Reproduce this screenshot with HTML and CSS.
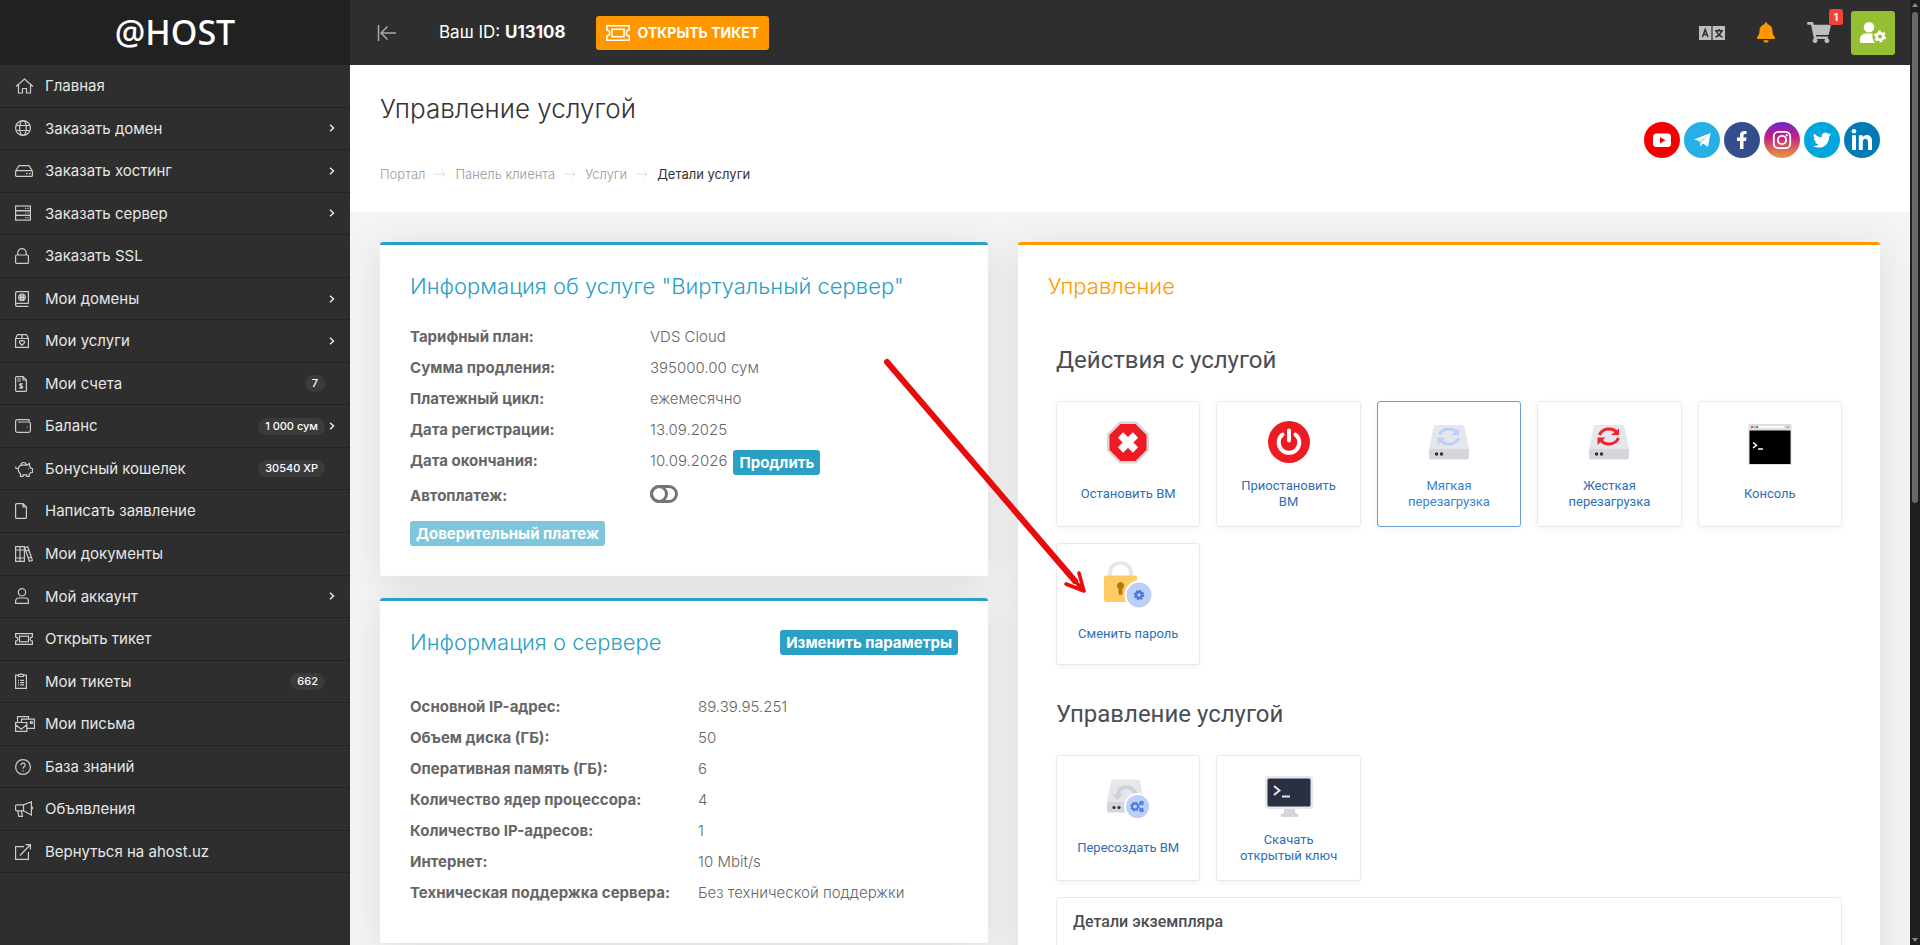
FILE: index.html
```html
<!DOCTYPE html>
<html lang="ru">
<head>
  <meta charset="UTF-8" />
  <title>Управление услугой</title>
  <link rel="stylesheet" href="styles.css">
</head>
<body>

  <!-- menu icons -->
  <svg class="sprite" aria-hidden="true">
    <symbol id="i-home" viewBox="0 0 20 16"><path d="M1 8.5 9.5 1 18 8.5M3.500 7v8h4v-4.500h4V15h4V7"/></symbol>
    <symbol id="i-globe" viewBox="0 0 16 16"><circle cx="8" cy="8" r="7.400"/><ellipse cx="8" cy="8" rx="3.400" ry="7.400"/><path d="M1.300 5.500h13.400M1.300 10.500h13.400"/></symbol>
    <symbol id="i-drive" viewBox="0 0 18 12"><path d="M.6 6 4 .6h10L17.400 6M1.600 5.600h14.800a1 1 0 0 1 1 1v3.800a1 1 0 0 1-1 1H1.600a1 1 0 0 1-1-1V6.600a1 1 0 0 1 1-1zM11 8.600h1.500M14 8.600h1.500"/></symbol>
    <symbol id="i-server" viewBox="0 0 16 16"><rect x=".6" y="1" width="14.800" height="4.700"/><rect x=".6" y="5.700" width="14.800" height="4.700"/><rect x=".6" y="10.400" width="14.800" height="4.700"/><path d="M10 3.300h1.200M12.500 3.300h1.200M10 8h1.200M12.500 8h1.200M10 12.700h1.200M12.500 12.700h1.200"/></symbol>
    <symbol id="i-lock" viewBox="0 0 14 16"><rect x=".6" y="7" width="12.800" height="8.400" rx="1"/><path d="M2.800 7V4.800a4.200 4.200 0 0 1 8.400 0V7"/></symbol>
    <symbol id="i-domains" viewBox="0 0 14 16"><path d="M13.400 12.400V.6H2A1.400 1.400 0 0 0 .6 2v12A1.400 1.400 0 0 0 2 15.400h11.400M.6 13.800A1.400 1.400 0 0 1 2 12.400h11.400"/><circle cx="7" cy="6.300" r="3.300"/><path d="M3.700 6.300h6.600M7 3v6.600M5.500 3.500v5.600M8.500 3.500v5.600"/></symbol>
    <symbol id="i-box" viewBox="0 0 14 14"><path d="M.6 4.500 2.500.6h9l1.900 3.900v8.900H.6zM.6 4.500h12.800M7 .6v3.900M7 11.200 4.700 9a1.300 1.300 0 0 1 2.300-1.800A1.300 1.300 0 0 1 9.300 9z"/></symbol>
    <symbol id="i-bill" viewBox="0 0 12 16"><path d="M1.600.6H8L11.400 4v10.400a1 1 0 0 1-1 1H1.600a1 1 0 0 1-1-1V1.600a1 1 0 0 1 1-1zM8 .6V4h3.400M2.300 3h3.500M2.300 5h3.500M7.800 8.300c-.5-.8-3.400-.9-3.400.5 0 1.500 3.400.7 3.400 2.200 0 1.400-2.900 1.300-3.500.4M6 7v6"/></symbol>
    <symbol id="i-wallet" viewBox="0 0 16 14"><path d="M14 3V.6H2.600a2 2 0 0 0-2 2v9a1.800 1.800 0 0 0 1.800 1.800h11.200a1.800 1.800 0 0 0 1.800-1.800V4.800A1.800 1.800 0 0 0 13.600 3H3M11.800 8h1"/></symbol>
    <symbol id="i-piggy" viewBox="0 0 18 16"><path d="M2 7.500C.9 7.500.4 6.500.8 5.700M2 7.500h1.200c.5-2 2-3.400 4.300-3.400h4.200L14.500 2.500v2.800c.8.600 1.400 1.400 1.700 2.200h1.200v4h-1.600l-1.600 1.700v2.200h-2.600v-1.500H8v1.500H5.400v-2.600C4 11.900 3 10.600 3.100 7.500M6 4.100a2.600 2.600 0 1 1 5.200 0M13 7.800h.8"/></symbol>
    <symbol id="i-file" viewBox="0 0 12 16"><path d="M1.600.6H8L11.400 4v10.400a1 1 0 0 1-1 1H1.600a1 1 0 0 1-1-1V1.600a1 1 0 0 1 1-1zM8 .6V4h3.400"/></symbol>
    <symbol id="i-books" viewBox="0 0 18 16"><path d="M.6.6h8.800v14.800H.6zM5 .6v14.800M.6 4h8.800M.6 12h8.800M9.700 1.700l3-.9 4.700 13.500-3 .9zM10.900 5l3-.9M13.300 12l3-.9"/></symbol>
    <symbol id="i-user" viewBox="0 0 14 16"><circle cx="7" cy="4.300" r="3.700"/><path d="M.6 15.400V13a3 3 0 0 1 3-3h6.800a3 3 0 0 1 3 3v2.400z"/></symbol>
    <symbol id="i-ticket" viewBox="0 0 18 12"><path d="M.6.6h16.800v3.200a2.200 2.200 0 0 0 0 4.400v3.200H.6V8.200a2.200 2.200 0 0 0 0-4.400z"/><rect x="4.500" y="3.200" width="9" height="5.600"/></symbol>
    <symbol id="i-clipboard" viewBox="0 0 12 16"><path d="M3.500 2.200H.6v13.200h10.800V2.200H8.500M3.500 3.500v-2H5a1.100 1.100 0 0 1 2 0h1.500v2zM3 7.300h1M5.200 7.300H9M3 9.600h1M5.200 9.600H9M3 11.900h1M5.200 11.900H9"/></symbol>
    <symbol id="i-mails" viewBox="0 0 20 16"><path d="M.6 6.500h11.200v8.900H.6zM.6 8.800l5.600 4.400 5.600-4.400M2.500 6V.6h11v2.500M6.500 6V3.200h12.900v9.200h-7"/><path d="M15.500 5.500h1.700v1.800h-1.700z"/></symbol>
    <symbol id="i-help" viewBox="0 0 16 16"><circle cx="8" cy="8" r="7.400"/><path d="M5.900 6.200c0-2.700 4.300-2.600 4.300 0C10.200 7.900 8 7.800 8 9.700M8 11.300v1.200"/></symbol>
    <symbol id="i-horn" viewBox="0 0 18 16"><path d="M8.500 3.800H1.600a1 1 0 0 0-1 1v4a1 1 0 0 0 1 1h6.900L16.400 14V.8zM8.500 3.800v6M2.800 9.800l1 5.600h3.600L6.500 9.800M17.400 5.800v2.400"/></symbol>
    <symbol id="i-external" viewBox="0 0 16 16"><path d="M9 2.600H.6v12.800h12.800V8M5 11.500 15 1M10.500.6h4.900v4.900"/></symbol>
    <symbol id="i-chevron" viewBox="0 0 6 8"><path d="M1 .8 4.500 4 1 7.200"/></symbol>
    <symbol id="i-arrow" viewBox="0 0 12 8"><path d="M0 4h11M8 1l3 3-3 3"/></symbol>
  </svg>

  <div class="app">
    <aside class="sidebar">
      <a href="#" class="logo">@HOST</a>
      <nav class="menu">
        <a href="#"><svg class="icon" width="20" height="16"><use href="#i-home"/></svg><span>Главная</span></a>
        <a href="#"><svg class="icon" width="16" height="16"><use href="#i-globe"/></svg><span>Заказать домен</span><svg class="chevron"><use href="#i-chevron"/></svg></a>
        <a href="#"><svg class="icon" width="18" height="12"><use href="#i-drive"/></svg><span>Заказать хостинг</span><svg class="chevron"><use href="#i-chevron"/></svg></a>
        <a href="#"><svg class="icon" width="16" height="16"><use href="#i-server"/></svg><span>Заказать сервер</span><svg class="chevron"><use href="#i-chevron"/></svg></a>
        <a href="#"><svg class="icon" width="14" height="16"><use href="#i-lock"/></svg><span>Заказать SSL</span></a>
        <a href="#"><svg class="icon" width="14" height="16"><use href="#i-domains"/></svg><span>Мои домены</span><svg class="chevron"><use href="#i-chevron"/></svg></a>
        <a href="#"><svg class="icon" width="14" height="14"><use href="#i-box"/></svg><span>Мои услуги</span><svg class="chevron"><use href="#i-chevron"/></svg></a>
        <a href="#"><svg class="icon" width="12" height="16"><use href="#i-bill"/></svg><span>Мои счета</span><b class="pill">7</b></a>
        <a href="#"><svg class="icon" width="16" height="14"><use href="#i-wallet"/></svg><span>Баланс</span><b class="pill">1 000 сум</b><svg class="chevron"><use href="#i-chevron"/></svg></a>
        <a href="#"><svg class="icon" width="18" height="16"><use href="#i-piggy"/></svg><span>Бонусный кошелек</span><b class="pill">30540 XP</b></a>
        <a href="#"><svg class="icon" width="12" height="16"><use href="#i-file"/></svg><span>Написать заявление</span></a>
        <a href="#"><svg class="icon" width="18" height="16"><use href="#i-books"/></svg><span>Мои документы</span></a>
        <a href="#"><svg class="icon" width="14" height="16"><use href="#i-user"/></svg><span>Мой аккаунт</span><svg class="chevron"><use href="#i-chevron"/></svg></a>
        <a href="#"><svg class="icon" width="18" height="12"><use href="#i-ticket"/></svg><span>Открыть тикет</span></a>
        <a href="#"><svg class="icon" width="12" height="16"><use href="#i-clipboard"/></svg><span>Мои тикеты</span><b class="pill">662</b></a>
        <a href="#"><svg class="icon" width="20" height="16"><use href="#i-mails"/></svg><span>Мои письма</span></a>
        <a href="#"><svg class="icon" width="16" height="16"><use href="#i-help"/></svg><span>База знаний</span></a>
        <a href="#"><svg class="icon" width="18" height="16"><use href="#i-horn"/></svg><span>Объявления</span></a>
        <a href="#"><svg class="icon" width="16" height="16"><use href="#i-external"/></svg><span>Вернуться на ahost.uz</span></a>
      </nav>
    </aside>

    <div class="main">
      <header class="topbar">
        <button type="button" class="collapse" aria-label="Свернуть меню">
          <svg width="20" height="16" viewBox="0 0 20 16"><path d="M1.500 0v16M4 8h15M10.500 1.500 4 8l6.500 6.500"/></svg>
        </button>
        <div class="client-id">Ваш ID: <b>U13108</b></div>
        <a href="#" class="open-ticket">
          <svg class="icon" width="24" height="16"><use href="#i-ticket"/></svg>
          ОТКРЫТЬ ТИКЕТ
        </a>
        <div class="tools">
          <button type="button" aria-label="Язык">
            <svg width="26" height="14" viewBox="0 0 26 14"><path fill="#bdbdbd" d="M0 0h12.400v14H0zM13.600 0H26v14H13.600z"/><path fill="none" stroke="#2e2e2e" stroke-width="1.500" d="M3.500 11 6.200 3.500 8.900 11M4.500 8.500h3.400M16 4.800h8M20 3v1.800M22.500 5c-.8 3-3 5-6 6M17.500 5c1 3 3 5 6 6"/></svg>
          </button>
          <button type="button" aria-label="Уведомления">
            <svg width="18" height="21" viewBox="0 0 448 512"><path fill="#ff9800" d="M224 512c35 0 64-29 64-64H160c0 35 29 64 64 64zm215-149c-19-21-55-52-55-155 0-77-54-139-128-155V32a32 32 0 1 0-64 0v21C118 69 64 131 64 208c0 103-36 134-55 155-6 6-9 14-9 21 0 16 13 32 32 32h384c19 0 32-16 32-32 0-7-3-15-9-21z"/></svg>
          </button>
          <button type="button" class="cart" aria-label="Корзина">
            <svg width="24" height="21" viewBox="0 0 576 512"><path fill="#bdbdbd" d="M528 301 576 94c3-15-8-30-24-30H159l-9-45C148 8 138 0 126 0H24C11 0 0 11 0 24v16c0 13 11 24 24 24h70l70 343a56 56 0 1 0 67 9h210a56 56 0 1 0 64-10l5-26c4-15-8-29-23-29H218l-7-32h294c11 0 21-8 23-18z"/></svg>
            <b class="cart-count">1</b>
          </button>
          <button type="button" class="profile" aria-label="Профиль">
            <svg width="26" height="22" viewBox="0 0 26 22"><path fill="#fff" d="M9 0a5.300 5.300 0 1 1 0 10.600A5.300 5.300 0 0 1 9 0zM5.500 11.500h7.300c-.6 2-.6 6 2.200 9.500H1.500A1.500 1.500 0 0 1 0 19.500v-2.600a5.500 5.500 0 0 1 5.500-5.400z"/><circle cx="20" cy="14.500" r="3.300" fill="none" stroke="#fff" stroke-width="2.600"/><circle cx="20" cy="14.500" r="5" fill="none" stroke="#fff" stroke-width="2" stroke-dasharray="2.800 2.430"/></svg>
          </button>
        </div>
      </header>

      <section class="page-head">
        <div>
          <h1>Управление услугой</h1>
          <nav class="crumbs">
            <a href="#">Портал</a><svg><use href="#i-arrow"/></svg>
            <a href="#">Панель клиента</a><svg><use href="#i-arrow"/></svg>
            <a href="#">Услуги</a><svg><use href="#i-arrow"/></svg>
            <span>Детали услуги</span>
          </nav>
        </div>
        <div class="socials">
          <a href="#" aria-label="YouTube"><svg viewBox="0 0 36 36"><circle cx="18" cy="18" r="18" fill="#f40000"/><rect x="9" y="11.500" width="18" height="13.500" rx="3.500" fill="#fff"/><path fill="#f40000" d="M16 15v6.500l5.500-3.200z"/></svg></a>
          <a href="#" aria-label="Telegram"><svg viewBox="0 0 36 36"><circle cx="18" cy="18" r="18" fill="#27b0e6"/><path fill="#fff" d="m10 17.600 16.500-6.500L24 25l-5-3.600-2.500 3-1-5.400z"/><path fill="#b5d7ea" d="m15.500 19 8-5.500-5.800 6.800-1.200 4.100z"/></svg></a>
          <a href="#" aria-label="Facebook"><svg viewBox="0 0 36 36"><circle cx="18" cy="18" r="18" fill="#344e8d"/><path fill="#fff" d="M16 27v-8h-3v-3.500h3V13c0-3 2-4.500 6.500-4V12c-2-.1-3 .1-3 1.800v1.700h3L22 19h-2.500v8z"/></svg></a>
          <a href="#" aria-label="Instagram"><svg viewBox="0 0 36 36"><defs><linearGradient id="insta" x2="0" y2="1"><stop stop-color="#6a28d0"/><stop offset=".4" stop-color="#c01e88"/><stop offset="1" stop-color="#e89c3c"/></linearGradient></defs><circle cx="18" cy="18" r="18" fill="url(#insta)"/><g fill="none" stroke="#fff" stroke-width="1.800"><rect x="9.800" y="9.800" width="16.400" height="16.400" rx="4.500"/><circle cx="18" cy="18" r="4.200"/></g><circle cx="22.800" cy="13.300" r="1.200" fill="#fff"/></svg></a>
          <a href="#" aria-label="Twitter"><svg viewBox="0 0 36 36"><circle cx="18" cy="18" r="18" fill="#00a6de"/><path fill="#fff" d="M27 12.500c-.7.300-1.300.5-2 .6.700-.5 1.300-1.100 1.600-2-.7.400-1.500.7-2.300.9a3.700 3.700 0 0 0-6.400 3.400c-3.100-.2-5.800-1.600-7.600-3.900a3.700 3.700 0 0 0 1.100 5c-.6 0-1.200-.2-1.700-.5 0 1.800 1.300 3.400 3 3.700-.5.200-1.100.2-1.700.1.500 1.500 1.800 2.500 3.500 2.600A7.500 7.500 0 0 1 9 23.900c7.500 4.500 16.200-.3 16.200-9.500.7-.5 1.300-1.200 1.800-1.900z"/></svg></a>
          <a href="#" aria-label="LinkedIn"><svg viewBox="0 0 36 36"><circle cx="18" cy="18" r="18" fill="#017ab5"/><path fill="#fff" d="M8 13.200h4V28H8zM14.800 13.200h4v2c2-3.500 9.200-3.200 9.200 3.800v9h-4v-8c0-4.500-5.200-4-5.200 0v8h-4z"/><circle cx="10" cy="9.300" r="2.300" fill="#fff"/></svg></a>
        </div>
      </section>

      <main class="content">
        <div class="column">
          <section class="card">
            <div class="card-head"><h2>Информация об услуге "Виртуальный сервер"</h2></div>
            <dl class="info">
              <div><dt>Тарифный план:</dt><dd>VDS Cloud</dd></div>
              <div><dt>Сумма продления:</dt><dd>395000.00 сум</dd></div>
              <div><dt>Платежный цикл:</dt><dd>ежемесячно</dd></div>
              <div><dt>Дата регистрации:</dt><dd>13.09.2025</dd></div>
              <div><dt>Дата окончания:</dt><dd>10.09.2026 <button type="button" class="btn">Продлить</button></dd></div>
              <div><dt><label for="autopay">Автоплатеж:</label></dt><dd><input type="checkbox" id="autopay" class="toggle"></dd></div>
            </dl>
            <button type="button" class="btn" disabled>Доверительный платеж</button>
          </section>

          <section class="card server">
            <div class="card-head"><h2>Информация о сервере</h2><button type="button" class="btn">Изменить параметры</button></div>
            <dl class="info info-wide">
              <div><dt>Основной IP-адрес:</dt><dd>89.39.95.251</dd></div>
              <div><dt>Объем диска (ГБ):</dt><dd>50</dd></div>
              <div><dt>Оперативная память (ГБ):</dt><dd>6</dd></div>
              <div><dt>Количество ядер процессора:</dt><dd>4</dd></div>
              <div><dt>Количество IP-адресов:</dt><dd>1</dd></div>
              <div><dt>Интернет:</dt><dd>10 Mbit/s</dd></div>
              <div><dt>Техническая поддержка сервера:</dt><dd>Без технической поддержки</dd></div>
            </dl>
          </section>
        </div>

        <section class="card manage">
          <div class="card-head"><h2>Управление</h2></div>
          <div class="panel">
            <h3>Действия с услугой</h3>
            <div class="tiles">
              <a href="#" class="tile">
                <svg viewBox="0 0 48 48"><path fill="#d5d6da" d="M15.500 3.500h17L45 16v17L32.500 45.500h-17L3 33V16z"/><path fill="#ed1c24" d="M16.500 6h15l11 11v15l-11 11h-15l-11-11V17z"/><path stroke="#fff" stroke-width="7.500" d="m16.500 17 15 15m0-15-15 15"/></svg>
                <span>Остановить ВМ</span>
              </a>
              <a href="#" class="tile">
                <svg viewBox="0 0 48 48"><circle cx="24" cy="24" r="21" fill="#ed1c24"/><path fill="none" stroke="#fff" stroke-width="4" stroke-linecap="round" d="M24 12.500v10M17.500 16.500a10.300 10.300 0 1 0 13 0"/></svg>
                <span>Приостановить ВМ</span>
              </a>
              <a href="#" class="tile active">
                <svg viewBox="0 0 48 48"><path fill="#e6e7ec" d="M11 7h26q2 0 2.500 2L44 31H4L8.500 9Q9 7 11 7z"/><path fill="#d5d6da" d="M4 31h40v8q0 2.500-2 2.500H6Q4 41.500 4 39z"/><g fill="none" stroke="#bccff7" stroke-width="3"><path d="M14.500 17c3-7 13-8 17.500-2.500M33.500 20c-3 7-13 8-17.500 2.500"/></g><path fill="#bccff7" d="M34 10.500V17h-8zM12.500 27v-7.500h8z"/><circle cx="11.500" cy="36" r="1.700" fill="#2b2f42"/><circle cx="16.500" cy="36" r="1.700" fill="#2b2f42"/></svg>
                <span>Мягкая перезагрузка</span>
              </a>
              <a href="#" class="tile">
                <svg viewBox="0 0 48 48"><path fill="#e6e7ec" d="M11 7h26q2 0 2.500 2L44 31H4L8.500 9Q9 7 11 7z"/><path fill="#d5d6da" d="M4 31h40v8q0 2.500-2 2.500H6Q4 41.500 4 39z"/><g fill="none" stroke="#f5222d" stroke-width="3"><path d="M14.500 17c3-7 13-8 17.500-2.500M33.500 20c-3 7-13 8-17.500 2.500"/></g><path fill="#f5222d" d="M34 10.500V17h-8zM12.500 27v-7.500h8z"/><circle cx="11.500" cy="36" r="1.700" fill="#2b2f42"/><circle cx="16.500" cy="36" r="1.700" fill="#2b2f42"/></svg>
                <span>Жесткая перезагрузка</span>
              </a>
              <a href="#" class="tile">
                <svg viewBox="0 0 48 48"><path fill="#dedfe5" d="M2.500 6h43v41h-43z"/><path d="M3.500 12.500h41V46h-41z"/><path fill="#fff" d="M13 8h25v2H13z"/><path fill="#e2574c" d="M5 8h2v2H5z"/><path fill="#f0a93b" d="M7.500 8h2v2h-2z"/><path fill="#3fae5a" d="M10 8h2v2h-2z"/><path fill="#bbb" d="M40 8h4v2h-4z"/><path fill="none" stroke="#fff" stroke-width="1.500" d="m7 24.500 3.500 2.700L7 30M12 31h5"/></svg>
                <span>Консоль</span>
              </a>
              <a href="#" class="tile">
                <svg viewBox="0 0 48 48"><path fill="none" stroke="#e6e7ec" stroke-width="4" d="M6 17v-3.500C6 7 10.500 3 16.500 3S27 7 27 13.500V17"/><rect x="0" y="15.500" width="33" height="26.500" rx="2.500" fill="#ffcb66"/><path fill="#b47b0b" d="M16.500 22a3.700 3.700 0 0 1 2 6.800V33a2 2 0 0 1-4 0v-4.200a3.700 3.700 0 0 1 2-6.800z"/><circle cx="35" cy="35" r="14.500" fill="#fff"/><circle cx="35" cy="35" r="12.500" fill="#bccff7"/><circle cx="35" cy="35" r="3" fill="none" stroke="#4a78d8" stroke-width="2.500"/><circle cx="35" cy="35" r="4.500" fill="none" stroke="#4a78d8" stroke-width="1.500" stroke-dasharray="1.800 1.730"/></svg>
                <span>Сменить пароль</span>
              </a>
            </div>

            <h3>Управление услугой</h3>
            <div class="tiles">
              <a href="#" class="tile">
                <svg viewBox="0 0 48 48"><path fill="#e6e7ec" d="M9 7.500h25q1.800 0 2.200 2L40 30H3L7 9.500q.4-2 2-2z"/><path fill="#d5d6da" d="M3 30h36v10.500H5q-2 0-2-2z"/><path fill="none" stroke="#d0d1d6" stroke-width="4" d="M14 22c2-9 14-9 18 0"/><path fill="#d0d1d6" d="M7.500 22h12l-6 6z"/><circle cx="10" cy="35.500" r="1.600" fill="#2b2f42"/><circle cx="15" cy="35.500" r="1.600" fill="#2b2f42"/><circle cx="33.500" cy="34.500" r="13.500" fill="#fff"/><circle cx="33.500" cy="34.500" r="11.500" fill="#bccff7"/><g fill="none" stroke="#4a78d8" stroke-width="1.800"><circle cx="31" cy="34.500" r="3"/><circle cx="37.500" cy="31" r="1.400"/><circle cx="37.500" cy="38" r="1.400"/></g><circle cx="31" cy="34.500" r="4.200" fill="none" stroke="#4a78d8" stroke-width="1.200" stroke-dasharray="1.600 1.700"/></svg>
                <span>Пересоздать ВМ</span>
              </a>
              <a href="#" class="tile">
                <svg viewBox="0 0 48 48"><rect y="4" width="48" height="33" rx="3" fill="#e6e7ec"/><rect x="2.500" y="6.500" width="43" height="28" rx="1.500" fill="#2b2f42"/><path fill="#d5d6da" d="M19 37h11v4q3.500 0 3.500 2.500 0 1.500-1.500 1.500H17q-1.500 0-1.500-1.500Q15.500 41 19 41z"/><path fill="none" stroke="#e6e7ec" stroke-width="2" d="m9 14 5.500 4.500L9 23M17 24.500h8"/></svg>
                <span>Скачать открытый ключ</span>
              </a>
            </div>

            <div class="details"><h4>Детали экземпляра</h4></div>
          </div>
        </section>
      </main>
    </div>

    <div class="scrollbar">
      <svg width="6" height="4" viewBox="0 0 6 4"><path fill="#8b8b8b" d="M3 0l3 4H0z"/></svg>
      <div class="thumb"></div>
      <svg width="6" height="4" viewBox="0 0 6 4"><path fill="#8b8b8b" d="M3 4l3-4H0z"/></svg>
    </div>
  </div>

  <!-- arrow pointing at the password tile -->
  <svg class="pointer" width="206" height="240" viewBox="0 0 206 240"><path stroke="#e90a0a" stroke-width="6" stroke-linecap="round" d="m4 4 188 219"/><path fill="none" stroke="#e90a0a" stroke-width="3.500" stroke-linecap="round" stroke-linejoin="round" d="m196 215 5 18-18-7M192 223l9 10"/></svg>

</body>
</html>
```

FILE: styles.css
```css
* {
  box-sizing: border-box;
}
body {
  margin: 0;
  font-family: Inter, "Noto Sans", sans-serif;
  font-size: 15px;
  line-height: 1.57;
  color: #666;
  background: #f4f4f4;
}
a {
  color: inherit;
  text-decoration: none;
}
button {
  font: inherit;
  border: 0;
  padding: 0;
  background: none;
}
h1, h2, h3, h4, dl, dd {
  margin: 0;
  font-weight: 400;
}
svg {
  display: block;
  flex-shrink: 0;
}
.sprite {
  position: absolute;
  width: 0;
  height: 0;
}
.app {
  display: flex;
  height: 100vh;
  overflow: hidden;
}

/* sidebar */
.sidebar {
  flex: 0 0 350px;
  background: #2e2e2e;
}
.logo {
  display: flex;
  align-items: center;
  justify-content: center;
  height: 65px;
  background: #212121;
  color: #fff;
  font-family: "Noto Sans", sans-serif;
  font-size: 34px;
  font-weight: 500;
}
.menu a {
  display: flex;
  align-items: center;
  padding: 9px 15px;
  border-bottom: 1px solid #212121;
  color: #e6e6e6;
}
.menu span {
  flex: 1;
}
.icon {
  fill: none;
  stroke: #ccc;
  stroke-width: 1.2;
}
.menu .icon[width="20"] { margin-right: 10px; }
.menu .icon[width="18"] { margin-right: 12px; }
.menu .icon[width="16"] { margin-right: 14px; }
.menu .icon[width="14"] { margin-right: 16px; }
.menu .icon[width="12"] { margin-right: 18px; }
.chevron {
  width: 6px;
  height: 8px;
  fill: none;
  stroke: #e6e6e6;
  stroke-width: 1.5;
}
.pill {
  margin-right: 10px;
  padding: 0 7px;
  border-radius: 9px;
  background: #3b3b3b;
  color: #fff;
  font-size: 11px;
  font-weight: 500;
  line-height: 17px;
}
.pill + .chevron {
  margin-left: -6px;
}

/* top bar */
.main {
  flex: 1;
  min-width: 0;
}
.topbar {
  display: flex;
  align-items: center;
  height: 65px;
  padding: 0 15px 0 27px;
  background: #2e2e2e;
  color: #fff;
}
.collapse svg {
  fill: none;
  stroke: #aaa;
  stroke-width: 1.5;
}
.client-id {
  margin: 0 30px 0 42px;
  font-size: 17px;
}
.open-ticket {
  display: flex;
  align-items: center;
  gap: 8px;
  height: 34px;
  padding: 0 10px;
  border-radius: 3px;
  background: #ff9800;
  font-size: 14px;
  font-weight: 700;
}
.open-ticket .icon {
  stroke: #fff;
}
.tools {
  display: flex;
  align-items: center;
  gap: 32px;
  margin-left: auto;
}
.cart {
  position: relative;
}
.cart-count {
  position: absolute;
  top: -13px;
  right: -12px;
  width: 14px;
  border-radius: 3px;
  background: #f44336;
  color: #fff;
  font-size: 10px;
  line-height: 16px;
}
.profile {
  display: flex;
  align-items: center;
  justify-content: center;
  width: 44px;
  height: 44px;
  margin-left: -12px;
  border-radius: 3px;
  background: #95be32;
}

/* page title */
.page-head {
  display: flex;
  justify-content: space-between;
  align-items: center;
  padding: 24px 30px 28px;
  background: #fff;
}
h1 {
  color: #333;
  font-size: 26px;
  font-weight: 300;
  line-height: 40px;
}
.crumbs {
  display: flex;
  align-items: center;
  gap: 9px;
  margin-top: 35px;
  color: #999;
  font-size: 13px;
  font-weight: 300;
  line-height: 20px;
}
.crumbs svg {
  width: 12px;
  height: 8px;
  fill: none;
  stroke: #ddd;
}
.crumbs span {
  color: #333;
  font-weight: 400;
}
.socials {
  display: flex;
  gap: 4px;
  padding-top: 6px;
}
.socials svg {
  width: 36px;
  height: 36px;
}

/* cards */
.content {
  display: grid;
  grid-template-columns: 608fr 862fr;
  align-items: start;
  gap: 30px;
  padding: 30px;
}
.column {
  display: grid;
  gap: 22px;
}
.card {
  padding: 27px 30px 30px;
  border-top: 3px solid #2ba0c5;
  border-radius: 3px;
  background: #fff;
  box-shadow: 0 5px 40px rgba(0, 0, 0, 0.1);
}
.card-head {
  display: flex;
  align-items: center;
  justify-content: space-between;
  margin-bottom: 21px;
}
h2 {
  color: #2ba0c5;
  font-size: 22px;
  font-weight: 300;
  line-height: 28px;
}
.server {
  padding-bottom: 35px;
}
.server .card-head {
  margin-bottom: 35px;
}
.info div {
  display: grid;
  grid-template-columns: 240px 1fr;
  padding: 5px 0;
  line-height: 21px;
}
.info-wide div {
  grid-template-columns: 288px 1fr;
}
.info {
  margin-bottom: 10px;
}
.server .info {
  margin-bottom: 0;
}
dt {
  font-weight: 700;
}
dd {
  display: flex;
  align-items: flex-start;
  gap: 6px;
  font-weight: 300;
}
.btn {
  padding: 0 6px;
  border-radius: 3px;
  background: #2ba0c5;
  color: #fff;
  font-weight: 700;
  line-height: 25px;
}
.btn:disabled {
  opacity: 0.6;
}
.toggle {
  appearance: none;
  width: 28px;
  height: 18px;
  margin: 0;
  border: 3px solid #757575;
  border-radius: 9px;
}
.toggle::before {
  content: "";
  display: block;
  box-sizing: border-box;
  width: 18px;
  height: 18px;
  margin: -3px;
  border: 3px solid #757575;
  border-radius: 50%;
}

/* service actions */
.manage {
  border-color: #ff9800;
}
.manage h2 {
  color: #ff9800;
}
.panel {
  padding: 23px 8px;
  font-family: Roboto, sans-serif;
}
h3 {
  color: #4b4d52;
  font-size: 24px;
  line-height: 32px;
}
.tiles {
  display: grid;
  grid-template-columns: repeat(5, 1fr);
  gap: 16px;
  margin: 25px 0 33px;
}
.tile {
  display: flex;
  flex-direction: column;
  align-items: center;
  gap: 12px;
  padding: 16px 20px;
  border: 1px solid #eaeaea;
  border-radius: 3px;
  box-shadow: 0 2px 6px rgba(0, 0, 0, 0.05);
  color: #2e6fb5;
  font-size: 13px;
  line-height: 16px;
  text-align: center;
}
.tile svg {
  width: 48px;
  height: 48px;
}
.tile span {
  display: flex;
  flex: 1;
  align-items: center;
  min-height: 28px;
}
.tile.active {
  border-color: #6c9fd2;
  color: #3b83cf;
}
.tiles + .details {
  margin-top: -17px;
}
.details {
  height: 200px;
  padding: 12px 16px;
  border: 1px solid #eaeaea;
  border-radius: 3px;
}
h4 {
  font-size: 16px;
  font-weight: 500;
  line-height: 24px;
  color: #4b4d52;
}

.scrollbar {
  display: flex;
  flex: 0 0 10px;
  flex-direction: column;
  gap: 5px;
  padding: 3px 2px;
  background: #1f1f1f;
}
.thumb {
  height: 52vh;
  margin-bottom: auto;
  border-radius: 3px;
  background: #686868;
}
.pointer {
  position: absolute;
  top: 358px;
  left: 883px;
}
```
